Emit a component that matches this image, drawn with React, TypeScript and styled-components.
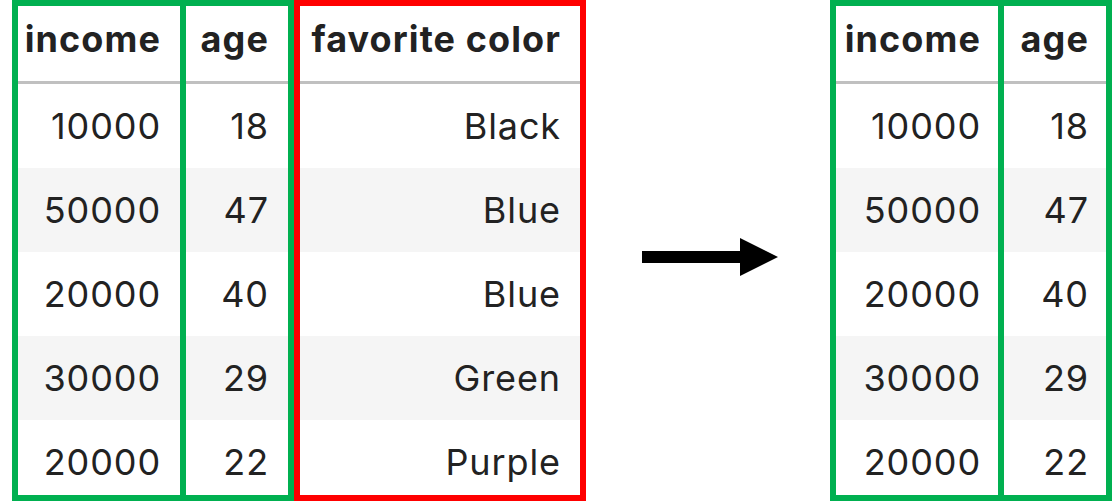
import React from "react";
import styled, { createGlobalStyle } from "styled-components";

const Global = createGlobalStyle`
  html, body { margin: 0; padding: 0; background: #ffffff; }
  body { width: 1118px; height: 502px; overflow: hidden; }
  #root { width: 1118px; height: 502px; }
`;

const GREEN = "#00b050";
const RED = "#ff0000";

const Page = styled.div`
  display: flex;
  align-items: flex-start;
  width: 1118px;
  height: 502px;
  padding-left: 12px;
  box-sizing: border-box;
  font-family: Inter, "Liberation Sans", Arial, sans-serif;
  color: #222222;
`;

const Table = styled.div`
  display: flex;
  align-items: flex-start;
`;

const Column = styled.div<{ $color: string; $width: number; $overlap: boolean }>`
  display: flex;
  flex-direction: column;
  box-sizing: border-box;
  width: ${(p) => p.$width}px;
  height: 501px;
  overflow: hidden;
  border: 6px solid ${(p) => p.$color};
  margin-left: ${(p) => (p.$overlap ? -6 : 0)}px;
  position: relative;
  z-index: ${(p) => (p.$overlap ? 1 : 0)};
`;

const HeaderCell = styled.div<{ $pad: number }>`
  flex: 0 0 auto;
  height: 78px;
  box-sizing: border-box;
  border-bottom: 3px solid #c0c0c0;
  display: flex;
  align-items: center;
  justify-content: flex-end;
  padding: 0 ${(p) => p.$pad}px 10px 0;
  font-size: 36px;
  font-weight: 700;
  letter-spacing: 1.1px;
  line-height: 1;
  white-space: nowrap;
`;

const Cell = styled.div<{ $striped: boolean; $pad: number }>`
  flex: 0 0 84px;
  height: 84px;
  display: flex;
  align-items: center;
  justify-content: flex-end;
  padding-right: ${(p) => p.$pad}px;
  box-sizing: border-box;
  background: ${(p) => (p.$striped ? "#f5f5f5" : "#ffffff")};
  font-size: 36px;
  font-weight: 400;
  letter-spacing: 0.9px;
  line-height: 1;
  white-space: nowrap;
`;

const ArrowWrap = styled.div`
  flex: 0 0 auto;
  margin: 238px 52px 0 56px;
  display: flex;
`;

type Col = { name: string; values: string[]; color: string; width: number };

const income = ["10000", "50000", "20000", "30000", "20000"];
const age = ["18", "47", "40", "29", "22"];
const fav = ["Black", "Blue", "Blue", "Green", "Purple"];

const leftCols: Col[] = [
  { name: "income", values: income, color: GREEN, width: 174 },
  { name: "age", values: age, color: GREEN, width: 114 },
  { name: "favorite color", values: fav, color: RED, width: 292 },
];

const rightCols: Col[] = [
  { name: "income", values: income, color: GREEN, width: 174 },
  { name: "age", values: age, color: GREEN, width: 114 },
];

function DataTable({ cols, pad }: { cols: Col[]; pad: number }) {
  return (
    <Table>
      {cols.map((c, i) => {
        const overlap = i > 0 && cols[i - 1].color === c.color;
        return (
          <Column key={c.name} $color={c.color} $width={c.width} $overlap={overlap}>
            <HeaderCell $pad={pad}>{c.name}</HeaderCell>
            {c.values.map((v, j) => (
              <Cell key={j} $striped={j % 2 === 1} $pad={pad}>
                {v}
              </Cell>
            ))}
          </Column>
        );
      })}
    </Table>
  );
}

function Arrow() {
  return (
    <svg width="136" height="38" viewBox="0 0 136 38">
      <rect x="0" y="13" width="99" height="12" fill="#000" />
      <polygon points="98,0 136,19 98,38" fill="#000" />
    </svg>
  );
}

export default function App() {
  return (
    <>
      <Global />
      <Page>
        <DataTable cols={leftCols} pad={19} />
        <ArrowWrap>
          <Arrow />
        </ArrowWrap>
        <DataTable cols={rightCols} pad={17} />
      </Page>
    </>
  );
}
